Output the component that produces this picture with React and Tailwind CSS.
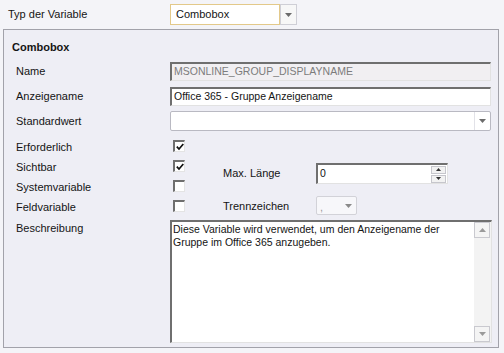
const Arrow = ({ up, color = "#6b6b6b" }) => (
  <svg width="7" height="4" viewBox="0 0 7 4">
    <path d={up ? "M0 4h7L3.5 0z" : "M0 0h7L3.5 4z"} fill={color} />
  </svg>
);

const Check = ({ on }) => (
  <div className="w-[12px] h-[12px] bg-white border-t-2 border-l-2 border-r border-b border-t-[#6f6f6f] border-l-[#6f6f6f] border-r-[#e4e4e4] border-b-[#e4e4e4] flex items-center justify-center">
    {on && (
      <svg width="8" height="8" viewBox="0 0 8 8">
        <path d="M0.8 3.6 L3 6 L7.3 1" stroke="#111" strokeWidth="1.7" fill="none" />
      </svg>
    )}
  </div>
);

const sunken =
  "border-t-2 border-l-2 border-r border-b border-t-[#6f6f6f] border-l-[#6f6f6f] border-r-[#e2e2e2] border-b-[#e2e2e2]";

function ScrollBtn({ up }) {
  return (
    <div className="w-[16px] h-[16px] bg-[#f4f4f4] border border-[#c9c9cf] flex items-center justify-center">
      <Arrow up={up} color="#9a9a9a" />
    </div>
  );
}

export default function App() {
  return (
    <div className="w-[504px] h-[353px] bg-[#f4f4f8] font-['Liberation_Sans',Arial,sans-serif] text-[11px] text-[#141414] overflow-hidden">
      {/* Typ der Variable */}
      <div className="h-[29px] flex items-center">
        <div className="w-[170px] pl-2">Typ der Variable</div>
        <div className="flex h-[21px]">
          <div className="w-[110px] bg-white border border-[#e3c98a] flex items-center pl-[5px]">Combobox</div>
          <div className="w-[17px] bg-[#f7f7f7] border border-[#cfcfd6] flex items-center justify-center">
            <Arrow />
          </div>
        </div>
      </div>

      {/* Group box */}
      <div className="mx-[3px] w-[496px] h-[319px] border border-[#a2a2aa] bg-[#eeeef5] flex flex-col">
        <div className="h-[32px] pl-[8px] pt-[10px] leading-[14px] font-bold">Combobox</div>

        <div className="flex h-[19px] items-center">
          <div className="w-[166px] pl-[12px]">Name</div>
          <div className={`w-[321px] h-full bg-[#f1eff2] text-[#7c7c7c] text-[10.5px] flex items-center pl-[2px] ${sunken}`}>
            MSONLINE_GROUP_DISPLAYNAME
          </div>
        </div>

        <div className="flex h-[19px] items-center mt-[6px]">
          <div className="w-[166px] pl-[12px]">Anzeigename</div>
          <div className={`w-[321px] h-full bg-white text-[10.5px] flex items-center pl-[2px] ${sunken}`}>
            Office 365 - Gruppe Anzeigename
          </div>
        </div>

        <div className="flex h-[20px] items-center mt-[5px]">
          <div className="w-[166px] pl-[12px]">Standardwert</div>
          <div className="w-[321px] h-full bg-white border border-[#b9b9c2] rounded-[2px] flex justify-end">
            <div className="w-[16px] h-full border-l border-[#e2e2e8] flex items-center justify-center">
              <Arrow />
            </div>
          </div>
        </div>

        <div className="flex mt-[5px]">
          <div className="w-[219px] flex flex-col">
            {[
              ["Erforderlich", true],
              ["Sichtbar", true],
              ["Systemvariable", false],
              ["Feldvariable", false],
            ].map(([label, on]) => (
              <div key={label} className="flex h-[20px] items-center">
                <div className="w-[166px] pl-[12px] pt-[2px]">{label}</div>
                <div className="pl-[3px]">
                  <Check on={on} />
                </div>
              </div>
            ))}
          </div>
          <div className="flex flex-col">
            <div className="flex h-[21px] items-center mt-[27px]">
              <div className="w-[93px]">Max. Länge</div>
              <div className={`w-[132px] h-full bg-white text-[10.5px] flex items-center justify-between pl-[2px] pr-[1px] ${sunken}`}>
                <span>0</span>
                <div className="flex flex-col gap-[1px]">
                  <div className="w-[15px] h-[8px] bg-[#f2f2f2] border border-[#c6c6cc] flex items-center justify-center">
                    <svg width="5" height="3" viewBox="0 0 5 3"><path d="M0 3h5L2.5 0z" fill="#333" /></svg>
                  </div>
                  <div className="w-[15px] h-[8px] bg-[#f2f2f2] border border-[#c6c6cc] flex items-center justify-center">
                    <svg width="5" height="3" viewBox="0 0 5 3"><path d="M0 0h5L2.5 3z" fill="#333" /></svg>
                  </div>
                </div>
              </div>
            </div>
            <div className="flex h-[19px] items-center mt-[12px]">
              <div className="w-[93px] pt-[1px]">Trennzeichen</div>
              <div className="w-[41px] h-full bg-[#f7f7fa] border border-[#d2d2d8] rounded-[2px] flex items-end justify-between pl-[3px] pr-[4px]">
                <span className="text-[#9a9a9a] leading-[14px]">,</span>
                <div className="h-full flex items-center">
                  <Arrow color="#8a8a8a" />
                </div>
              </div>
            </div>
          </div>
        </div>

        <div className="flex mt-[4px]">
          <div className="w-[166px] pl-[12px] pt-[1px] leading-[14px]">Beschreibung</div>
          <div className={`w-[322px] h-[123px] bg-white flex ${sunken}`}>
            <div className="flex-1 pl-[1px] pt-[1px] text-[10.5px] leading-[13px]">
              Diese Variable wird verwendet, um den Anzeigename der
              <br />
              Gruppe im Office 365 anzugeben.
            </div>
            <div className="w-[17px] h-full bg-[#f3f3f3] flex flex-col justify-between">
              <ScrollBtn up />
              <ScrollBtn />
            </div>
          </div>
        </div>
      </div>
    </div>
  );
}
